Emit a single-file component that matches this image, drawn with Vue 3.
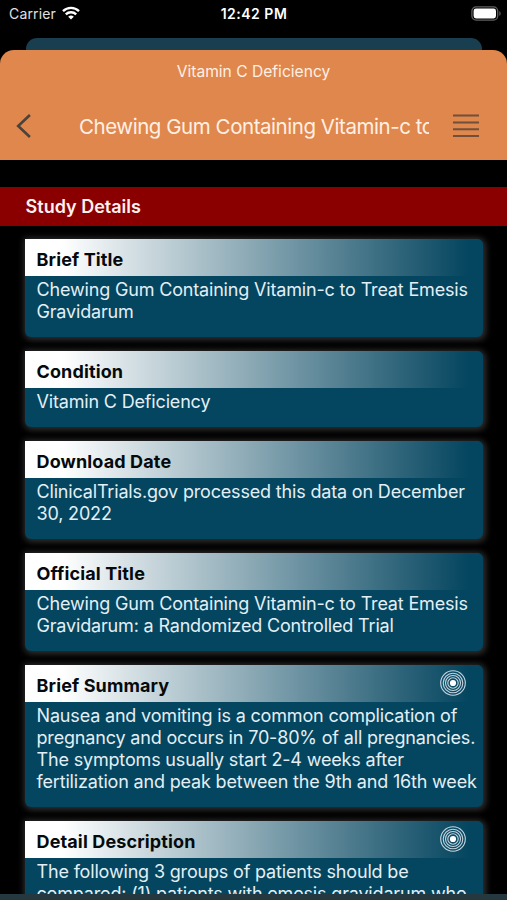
<script setup>
const sections = [
  { title: 'Brief Title', lines: ['Chewing Gum Containing Vitamin-c to Treat Emesis', 'Gravidarum'] },
  { title: 'Condition', lines: ['Vitamin C Deficiency'] },
  { title: 'Download Date', lines: ['ClinicalTrials.gov processed this data on December', '30, 2022'] },
  { title: 'Official Title', lines: ['Chewing Gum Containing Vitamin-c to Treat Emesis', 'Gravidarum: a Randomized Controlled Trial'] },
  {
    title: 'Brief Summary',
    expandable: true,
    lines: [
      'Nausea and vomiting is a common complication of',
      'pregnancy and occurs in 70-80% of all pregnancies.',
      'The symptoms usually start 2-4 weeks after',
      'fertilization and peak between the 9th and 16th week',
    ],
  },
  {
    title: 'Detail Description',
    expandable: true,
    lines: ['The following 3 groups of patients should be', 'compared: (1) patients with emesis gravidarum who'],
  },
]
</script>

<template>
  <div class="screen">
    <div class="status">
      <div class="carrier">
        <span>Carrier</span>
        <svg class="wifi" viewBox="0 0 18 14" width="18" height="14">
          <path d="M1 5.1a11.5 11.5 0 0 1 16 0" />
          <path d="M3.8 8.3a7.5 7.5 0 0 1 10.4 0" />
          <path class="dot" d="M9 13.6 6.2 10.8a4 4 0 0 1 5.6 0z" />
        </svg>
      </div>
      <div class="clock">12:42 PM</div>
      <svg class="battery" viewBox="0 0 31 15" width="31" height="15">
        <rect class="shell" x=".9" y=".9" width="25.8" height="13.2" rx="4.2" />
        <rect class="charge" x="2.6" y="2.6" width="22.4" height="9.8" rx="2.4" />
        <path class="tip" d="M28.3 5.2c1.8.7 1.8 3.9 0 4.6z" />
      </svg>
    </div>
    <div class="behind"></div>
    <header class="sheet">
      <div class="subtitle">Vitamin C Deficiency</div>
      <div class="nav">
        <svg class="back" viewBox="0 0 16 24" width="16" height="24"><path d="M13.9 1 2.2 12l11.7 11" /></svg>
        <div class="heading"><span>Chewing Gum Containing Vitamin-c to Treat Emesis</span></div>
        <svg class="menu" viewBox="0 0 26 24" width="26" height="24"><path d="M0 1.5h26M0 8.4h26M0 15.2h26M0 22.1h26" /></svg>
      </div>
    </header>
    <div class="band"><span>Study Details</span></div>
    <main class="list">
      <section v-for="s in sections" :key="s.title" class="card">
        <div class="card-head">
          <h2>{{ s.title }}</h2>
          <svg v-if="s.expandable" class="target" viewBox="0 0 26 26" width="26" height="26">
            <circle cx="13" cy="13" r="12.3" />
            <circle cx="13" cy="13" r="9.8" />
            <circle cx="13" cy="13" r="7.5" />
            <circle cx="13" cy="13" r="5.2" />
            <circle class="core" cx="13" cy="13" r="3.1" />
          </svg>
        </div>
        <div class="card-body">
          <div v-for="line in s.lines" :key="line" class="line"><span>{{ line }}</span></div>
        </div>
      </section>
    </main>
    <div class="bottom"></div>
  </div>
</template>

<style>
body {
  margin: 0;
  background: #000;
}
</style>

<style scoped>
.screen {
  width: 507px;
  height: 900px;
  display: flex;
  flex-direction: column;
  overflow: hidden;
  background: #000;
  color: #fff;
  font-family: Inter, 'Liberation Sans', sans-serif;
}
.status {
  height: 38px;
  flex: none;
  box-sizing: border-box;
  padding: 5px 5px 0 9px;
  display: grid;
  grid-template-columns: 1fr auto 1fr;
  align-items: start;
  font-size: 14px;
  line-height: 18px;
}
.carrier {
  display: flex;
  gap: 6px;
  color: #e0e0e0;
  letter-spacing: 0.15px;
}
.wifi {
  margin-top: 1px;
  fill: none;
  stroke: #fff;
  stroke-width: 2.4;
}
.wifi .dot {
  fill: #fff;
  stroke: none;
}
.clock {
  font-weight: 600;
  letter-spacing: 0.5px;
  padding-right: 3px;
}
.battery {
  justify-self: end;
  margin-top: 1px;
}
.shell {
  fill: none;
  stroke: #606060;
  stroke-width: 1.3;
}
.charge {
  fill: #fff;
}
.tip {
  fill: #606060;
}
.behind {
  flex: none;
  height: 24px;
  margin: 0 25px -12px 26px;
  border-radius: 11px 11px 0 0;
  background: #193e50;
}
.sheet {
  flex: none;
  height: 110px;
  box-sizing: border-box;
  background: #df874c;
  border-radius: 14px 14px 0 0;
  padding-top: 12px;
  color: #fff0e4;
  z-index: 1;
}
.subtitle {
  text-align: center;
  font-size: 15.6px;
  line-height: 20px;
}
.nav {
  display: flex;
  align-items: center;
  margin-top: 32px;
  padding: 0 28px 0 16px;
  height: 24px;
}
.back {
  fill: none;
  stroke: #49423d;
  stroke-width: 2.6;
}
.heading {
  width: 350px;
  margin: 2px 24px 0 47px;
  overflow: hidden;
  white-space: nowrap;
  font-size: 20.5px;
  letter-spacing: -0.45px;
  line-height: 28px;
}
.menu {
  stroke: #71503b;
  stroke-width: 2;
}
.band {
  flex: none;
  height: 39px;
  margin-top: 26.5px;
  padding-left: 25.6px;
  background: #8a0000;
  font-size: 18px;
  font-weight: 600;
  line-height: 40px;
  color: #fff0f0;
}
.list {
  flex: 1;
  min-height: 0;
  overflow: hidden;
  padding: 13.5px 24.5px 0 25px;
  display: flex;
  flex-direction: column;
  gap: 14px;
}
.card {
  flex: none;
  background: #04455f;
  border-radius: 0 6px 6px 6px;
  box-shadow: 1px 1px 6px 2px #303030;
}
.card-head {
  height: 37px;
  display: flex;
  justify-content: space-between;
  align-items: flex-start;
  border-radius: 0 6px 0 0;
  padding: 0 17px 0 11.5px;
  background: linear-gradient(90deg, #fff 8%, #04455f 97%);
}
h2 {
  margin: 0;
  font-size: 18px;
  font-weight: 700;
  letter-spacing: 0.13px;
  line-height: 41px;
  color: #050a0d;
}
.target {
  margin-top: 5px;
  fill: none;
  stroke: #c4d5df;
  stroke-width: 1.1;
}
.target .core {
  fill: #fff;
  stroke: none;
}
.card-body {
  padding: 3.2px 0 14.1px 11.5px;
  font-size: 18px;
  letter-spacing: -0.17px;
  line-height: 21.85px;
  color: #e3eff5;
}
.line {
  white-space: nowrap;
  height: 21.85px;
}
.bottom {
  flex: none;
  height: 6px;
  background: #253840;
}
</style>
